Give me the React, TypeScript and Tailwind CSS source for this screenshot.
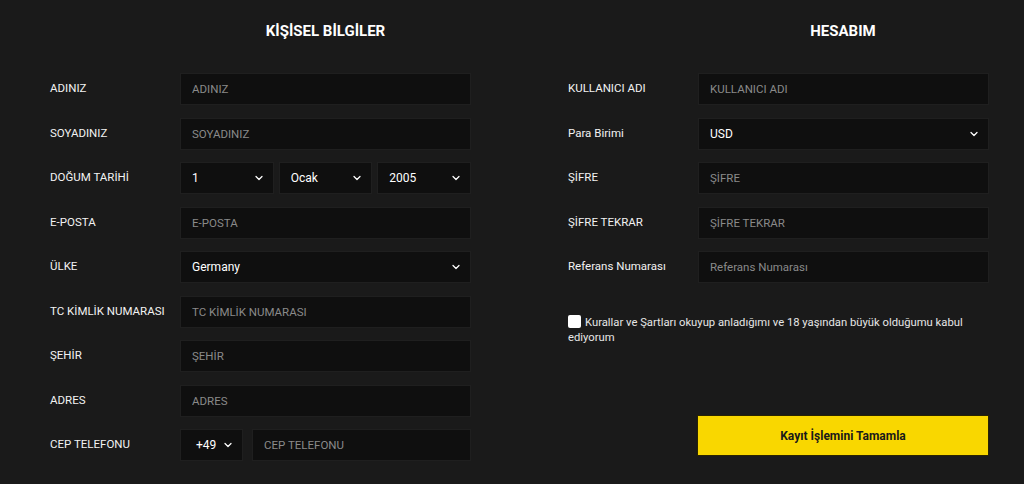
import React from "react";
import { ChevronDown } from "lucide-react";

const font = { fontFamily: "Roboto, 'Liberation Sans', sans-serif" };

const TextField: React.FC<{ placeholder: string; className?: string }> = ({ placeholder, className = "" }) => (
  <input
    placeholder={placeholder}
    className={`h-[32px] bg-[#0f0f0f] border border-[#1f1f1f] px-[11px] text-[11.5px] text-white placeholder:text-[#8a8a8a] outline-none ${className}`}
    style={font}
  />
);

const SelectBox: React.FC<{ value: string; className?: string; center?: boolean }> = ({ value, className = "", center }) => (
  <div
    className={`h-[32px] bg-[#0f0f0f] border border-[#1f1f1f] pl-[11px] pr-[8px] flex items-center justify-between text-[12px] text-white ${className}`}
  >
    <span className={center ? "pl-[4px]" : ""}>{value}</span>
    <ChevronDown className="w-[12px] h-[12px] text-white" strokeWidth={2.5} />
  </div>
);

const Row: React.FC<{ label: string; children: React.ReactNode }> = ({ label, children }) => (
  <div className="flex items-center">
    <div className="w-[130px] shrink-0 text-[11.5px] text-[#f2f2f2]">{label}</div>
    <div className="flex-1 flex gap-[5px]">{children}</div>
  </div>
);

export default function App() {
  return (
    <div className="w-[1024px] h-[484px] bg-[#1a1a1a] overflow-hidden" style={font}>
      <div className="flex pl-[50px] pt-[21px]">
        {/* Personal info */}
        <div className="w-[421px] flex flex-col">
          <div className="flex mb-[32px]">
            <div className="w-[130px]" />
            <h2 className="flex-1 text-center text-[15px] leading-[20px] font-bold text-white">KİŞİSEL BİLGİLER</h2>
          </div>
          <div className="flex flex-col gap-[12.5px]">
            <Row label="ADINIZ"><TextField placeholder="ADINIZ" className="flex-1" /></Row>
            <Row label="SOYADINIZ"><TextField placeholder="SOYADINIZ" className="flex-1" /></Row>
            <Row label="DOĞUM TARİHİ">
              <SelectBox value="1" className="flex-1" />
              <SelectBox value="Ocak" className="flex-1" />
              <SelectBox value="2005" className="flex-1" />
            </Row>
            <Row label="E-POSTA"><TextField placeholder="E-POSTA" className="flex-1" /></Row>
            <Row label="ÜLKE"><SelectBox value="Germany" className="flex-1" /></Row>
            <Row label="TC KİMLİK NUMARASI"><TextField placeholder="TC KİMLİK NUMARASI" className="flex-1" /></Row>
            <Row label="ŞEHİR"><TextField placeholder="ŞEHİR" className="flex-1" /></Row>
            <Row label="ADRES"><TextField placeholder="ADRES" className="flex-1" /></Row>
            <Row label="CEP TELEFONU">
              <div className="flex gap-[9px] flex-1">
                <SelectBox value="+49" className="w-[63px]" center />
                <TextField placeholder="CEP TELEFONU" className="flex-1 min-w-0" />
              </div>
            </Row>
          </div>
        </div>

        {/* Account */}
        <div className="w-[421px] ml-[97px] flex flex-col">
          <div className="flex mb-[32px]">
            <div className="w-[129px]" />
            <h2 className="flex-1 text-center text-[15px] leading-[20px] font-bold text-white">HESABIM</h2>
          </div>
          <div className="flex flex-col gap-[12.5px]">
            <Row label="KULLANICI ADI"><TextField placeholder="KULLANICI ADI" className="flex-1" /></Row>
            <Row label="Para Birimi"><SelectBox value="USD" className="flex-1" /></Row>
            <Row label="ŞİFRE"><TextField placeholder="ŞİFRE" className="flex-1" /></Row>
            <Row label="ŞİFRE TEKRAR"><TextField placeholder="ŞİFRE TEKRAR" className="flex-1" /></Row>
            <Row label="Referans Numarası"><TextField placeholder="Referans Numarası" className="flex-1" /></Row>
          </div>
          <label className="mt-[32px] pr-[20px] text-[11.25px] leading-[15px] text-[#e6e6e6]">
            <span className="inline-block align-[-2px] w-[13px] h-[13px] bg-white rounded-[2px] mr-[4px]" />
            Kurallar ve Şartları okuyup anladığımı ve 18 yaşından büyük olduğumu kabul ediyorum
          </label>
          <div className="flex mt-[70px]">
            <div className="w-[129px]" />
            <button className="flex-1 h-[41px] bg-[#f9d700] border border-[#2a2400] text-[12px] font-bold text-[#1a1a1a]">
              Kayıt İşlemini Tamamla
            </button>
          </div>
        </div>
      </div>
    </div>
  );
}
